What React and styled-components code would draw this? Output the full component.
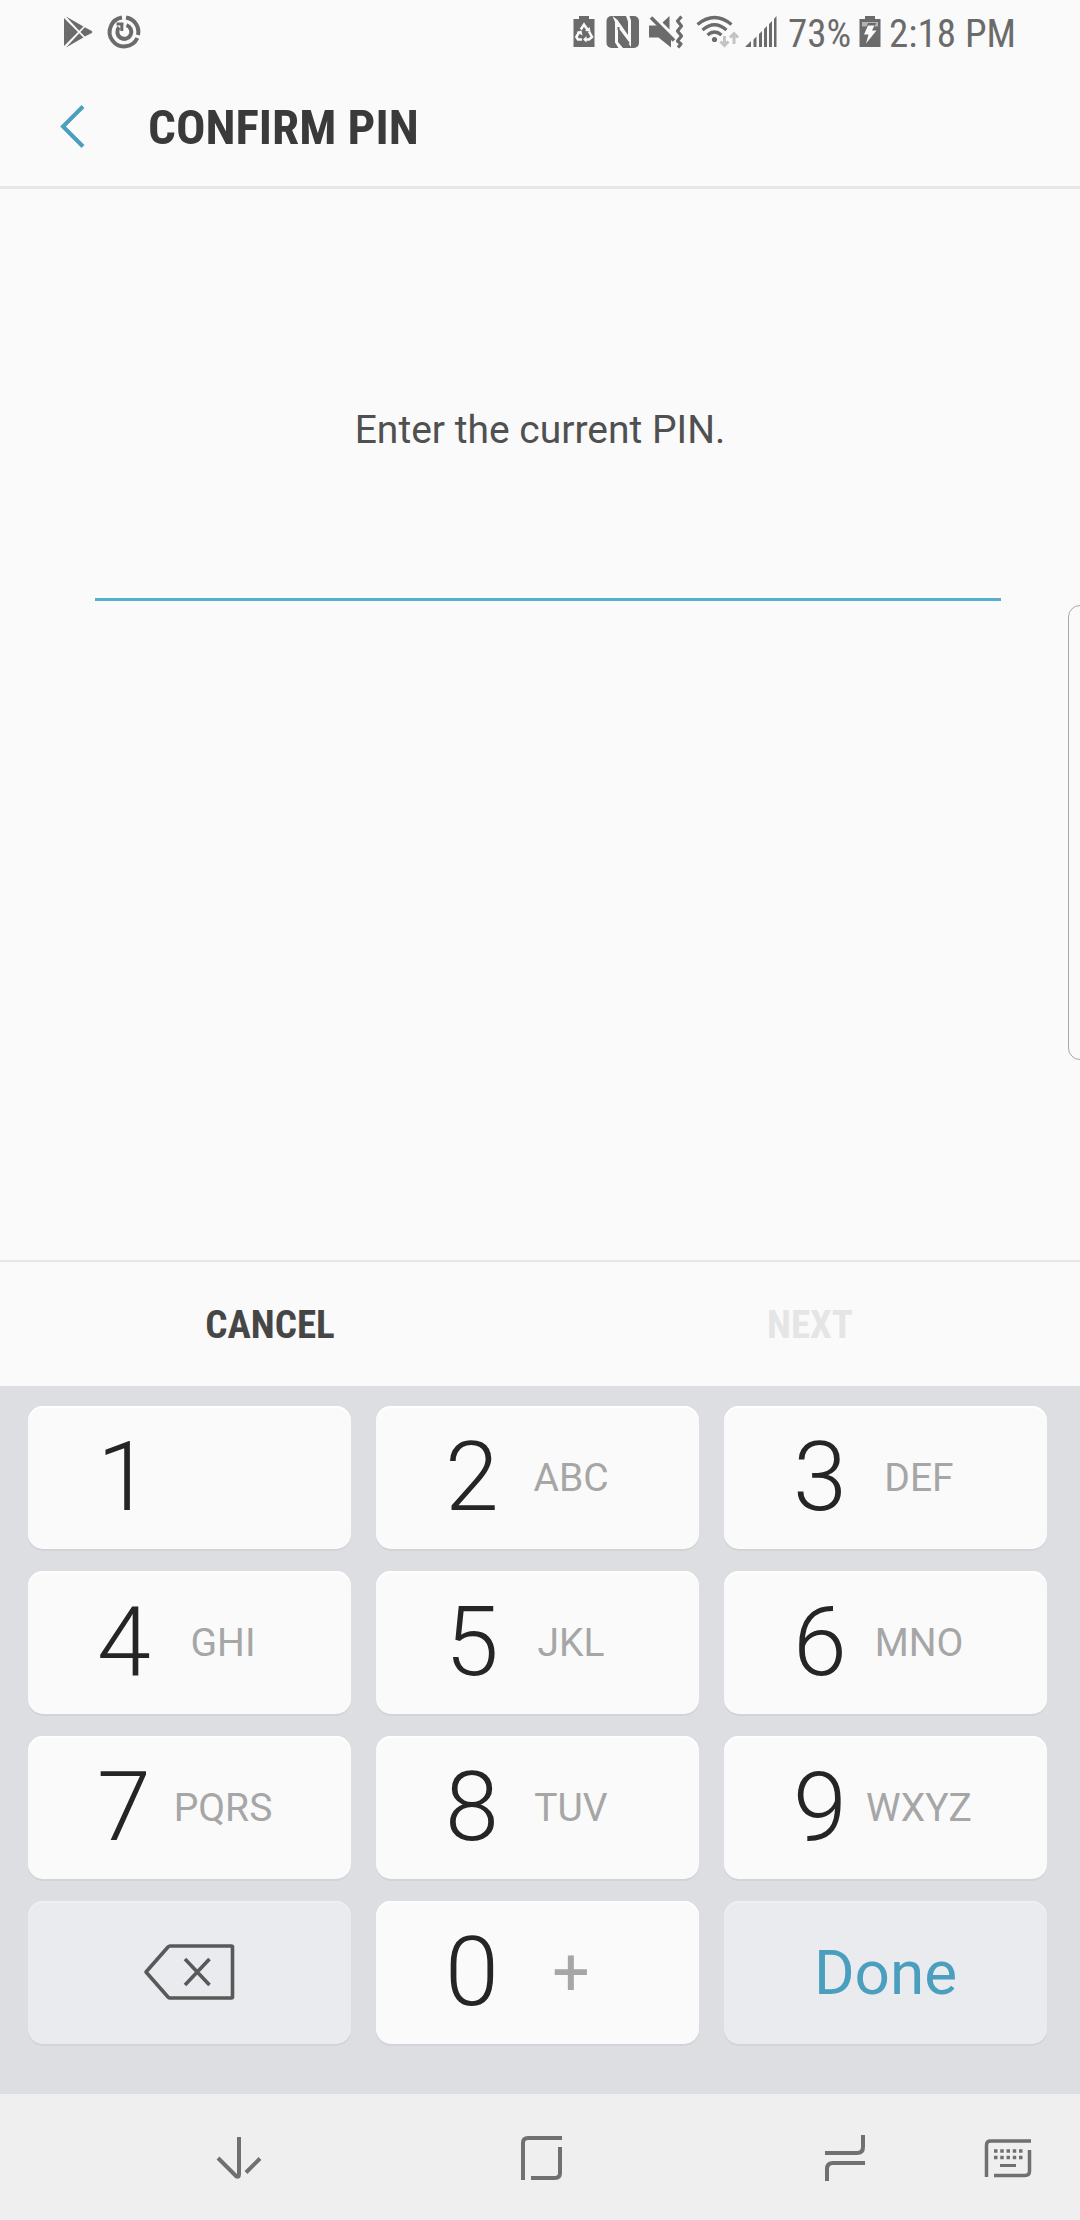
import React, { useState } from "react";
import styled, { createGlobalStyle } from "styled-components";

const GlobalStyle = createGlobalStyle`
  * {
    box-sizing: border-box;
  }
  body {
    margin: 0;
    background: #fafafa;
    font-family: Roboto, "Noto Sans", sans-serif;
  }
  button,
  input {
    margin: 0;
    padding: 0;
    border: 0;
    background: none;
    font: inherit;
    color: inherit;
    outline: none;
  }
  svg {
    display: block;
    flex: none;
    overflow: visible;
  }
`;

const condensed = `"Roboto Condensed", Roboto, sans-serif`;

const Screen = styled.div`
  position: relative;
  display: flex;
  flex-direction: column;
  min-height: 100vh;
  overflow: hidden;
`;

const StatusBar = styled.div`
  display: flex;
  justify-content: space-between;
  align-items: center;
  height: 64px;
  padding: 0 64px 0 62px;
  color: #6b6b6b;
`;

const StatusGroup = styled.div`
  display: flex;
  align-items: center;
  gap: ${(p) => p.$gap}px;
`;

const StatusText = styled.span`
  padding-top: 4px;
  font-family: ${condensed};
  font-size: 39px;
  line-height: 56px;
`;

const Header = styled.header`
  display: flex;
  align-items: center;
  gap: 60px;
  height: 125px;
  padding: 2px 0 0 56px;
  border-bottom: 3px solid #e7e7e7;
`;

const Title = styled.h1`
  margin: 0;
  padding-top: 4px;
  color: #3a3a3a;
  font-family: ${condensed};
  font-size: 49px;
  font-weight: 700;
  line-height: 64px;
`;

const IconButton = styled.button`
  display: flex;
  align-items: center;
  justify-content: center;
  width: ${(p) => p.$width}px;
  height: 80px;
  color: ${(p) => p.$color};
`;

const Main = styled.main`
  flex: 1;
  display: flex;
  flex-direction: column;
  padding: 213px 79px 0 95px;
`;

const Prompt = styled.label`
  align-self: center;
  margin-right: 16px;
  color: #505050;
  font-size: 39px;
  line-height: 56px;
`;

const PinInput = styled.input`
  width: 100%;
  height: 143px;
  padding-top: 72px;
  border-bottom: 3px solid #56aed0;
  border-radius: 0;
  color: #3a3a3a;
  font-size: 49px;
  text-align: center;
  caret-color: transparent;
`;

const EdgeHandle = styled.div`
  position: absolute;
  top: 605px;
  right: -12px;
  width: 24px;
  height: 455px;
  border: 1px solid #a8a8a8;
  border-radius: 18px;
`;

const Actions = styled.div`
  display: grid;
  grid-template-columns: 1fr 1fr;
  height: 126px;
  border-top: 2px solid #e6e6e6;
`;

const ActionButton = styled.button`
  padding-top: 2px;
  color: #464646;
  font-family: ${condensed};
  font-size: 39px;
  font-weight: 700;
  line-height: 56px;
  &:disabled {
    color: #e5e5e5;
  }
`;

const Keypad = styled.div`
  display: grid;
  grid-template-columns: repeat(3, 1fr);
  gap: 22px 25px;
  padding: 20px 33px 50px 28px;
  background: #dddee2;
`;

const Key = styled.button`
  display: flex;
  align-items: center;
  justify-content: ${(p) => (p.$tinted ? "center" : "flex-start")};
  height: 143px;
  padding-left: ${(p) => (p.$tinted ? 0 : 64)}px;
  border-radius: 15px;
  background: ${(p) => (p.$tinted ? "#e9ebef" : "#fafafa")};
  box-shadow: 0 2px 0 #d3d4d8, inset 0 2px 0 ${(p) => (p.$tinted ? "#eeeff2" : "#ffffff")};
  color: ${(p) => (p.$tinted ? "#4b9fbe" : "#252525")};
  font-size: 62px;
`;

const Digit = styled.span`
  width: 64px;
  padding-bottom: 2px;
  font-size: 97px;
  font-weight: 300;
  line-height: 112px;
  text-align: center;
`;

const Letters = styled.span`
  width: 134px;
  color: #a6a6a6;
  font-size: ${(p) => (p.$symbol ? 66 : 39)}px;
  line-height: 64px;
  text-align: center;
`;

const NavBar = styled.nav`
  display: flex;
  align-items: center;
  gap: 87px;
  height: 126px;
  padding: 2px 36px 0 199px;
  background: #efefef;
`;

const NavMain = styled.div`
  flex: 1;
  display: flex;
  justify-content: space-between;
`;

const PlayIcon = () => (
  <svg width="32" height="34" viewBox="0 0 32 34" fill="currentColor" aria-hidden="true">
    <path d="M2 3v28l14-14zM4 1.500l13.200 14.200 4.200-4.200zM22.800 12.300l-4.400 4.600 4.400 4.600 7-3.600q1.200-1 0-2zM4 32.500l13.200-14.200 4.200 4.200z" />
  </svg>
);

const UpdateIcon = () => (
  <svg width="34" height="34" viewBox="0 0 34 34" fill="none" stroke="currentColor" strokeWidth="4" aria-hidden="true">
    <path d="M15 2.600A14.500 14.500 0 1 0 30.300 23M19 2.600A14.500 14.500 0 0 1 31 20" />
    <path d="M19.500 10.200A7 7 0 1 1 12 12.300" />
    <path d="M9.500 9h7M14.800 9v7" strokeWidth="3" />
  </svg>
);

const RecycleBatteryIcon = () => (
  <svg width="25" height="34" viewBox="0 0 25 34" aria-hidden="true">
    <path fill="currentColor" d="M6 1h10v3h5.500v28H.5V4H6z" />
    <g fill="none" stroke="#fafafa" strokeWidth="2.500">
      <path d="M7.800 14.500l3.200-5 3.500 5.200M16 16.500l3 5.500-3 2.500h-3M9 24.500H5L3.300 22l2.900-5" />
    </g>
    <path fill="#fafafa" d="M12 16l5.500.5-1-4.500zM13.500 21v6.500L10 24.500zM3.500 17l5-1.500 1 5z" />
  </svg>
);

const NfcIcon = () => (
  <svg width="34" height="34" viewBox="0 0 34 34" aria-hidden="true">
    <rect x="0.500" y="1" width="32.500" height="32" rx="5" fill="currentColor" />
    <path fill="#fafafa" d="M6.500 1l5 4L22 20V6.500L20 1h3.500L25 5.500V32L12 14v13l5 6h-4.500L9 27.500V7z" />
    <path stroke="currentColor" strokeWidth="2" d="M12.500 12v2.500L23 28.500" fill="none" />
  </svg>
);

const MuteVibrateIcon = () => (
  <svg width="40" height="34" viewBox="0 0 40 34" aria-hidden="true">
    <path fill="currentColor" d="M1 10.500h9L23 23v9.500L10.500 22.500H1zM14.500 7.500L21.500 1v13.500z" />
    <path stroke="currentColor" strokeWidth="3.600" d="M3 2.500l23 23" />
    <path fill="none" stroke="currentColor" strokeWidth="3.200" strokeLinejoin="round" d="M33.500 1.500l-4 4.500 4 5-4 5 4 5-4 5 3.500 3-3 3.500" />
  </svg>
);

const WifiIcon = () => (
  <svg width="41" height="34" viewBox="0 0 41 34" aria-hidden="true">
    <g fill="none" stroke="currentColor" strokeWidth="3.200">
      <path d="M1.500 9.500q17-14 34 0M6.500 15q12-10.500 24 0M11.500 20q7-6 14 0" />
    </g>
    <circle cx="18.500" cy="24.500" r="2.600" fill="currentColor" />
    <path fill="none" stroke="#c3c3c3" strokeWidth="3" d="M28.500 21v9M24.500 26.500l4 4 4-4M38 29v-9M34 22.500l4-4 4 4" />
  </svg>
);

const SignalIcon = () => (
  <svg width="35" height="34" viewBox="0 0 35 34" fill="currentColor" aria-hidden="true">
    <path d="M0 32l6-6v6zM8.500 24.500l3-3V32h-3zM14 19l3-3v16h-3zM19 14l3-3v21h-3zM24 9l3-3v26h-3zM29 4l2.500-3v31H29z" />
  </svg>
);

const ChargingIcon = () => (
  <svg width="22" height="34" viewBox="0 0 22 34" aria-hidden="true">
    <path fill="currentColor" d="M6 1h10v3h5.500v28H.5V4H6z" />
    <path fill="#b4b4b4" d="M3 7h16v4.500H3z" />
    <path fill="currentColor" d="M9 8h8l-2 5H7z" />
    <path fill="#fafafa" d="M9 10.500h6.500L13 15.500h4.500L7 28.500l2.500-9H5z" />
  </svg>
);

const BackIcon = () => (
  <svg width="26" height="44" viewBox="0 0 26 44" fill="none" stroke="currentColor" strokeWidth="4" aria-hidden="true">
    <path d="M24 2.500L4 22.500 24 42.500" />
  </svg>
);

const BackspaceIcon = () => (
  <svg width="92" height="58" viewBox="1 1 92 58" fill="none" stroke="#595959" strokeWidth="3.600" strokeLinejoin="round" aria-hidden="true">
    <path d="M27 3h61.500q1 0 1 1v50q0 1-1 1H27q-1 0-2-1L3 29 25 4q1-1 2-1z" />
    <path d="M42 16l24.500 26M66.500 16L42 42" />
  </svg>
);

const HideIcon = () => (
  <svg width="46" height="46" viewBox="0 0 46 46" fill="none" stroke="currentColor" strokeWidth="4" aria-hidden="true">
    <path d="M2 23l18.500 18.500q2.500 1 2.500-2V2M30 37.500l14-14" />
  </svg>
);

const HomeIcon = () => (
  <svg width="44" height="46" viewBox="0 0 44 46" fill="none" stroke="currentColor" strokeWidth="4" aria-hidden="true">
    <path d="M3 45V8q0-5 5-5h34M11 43h24q5 0 5-5V12" />
  </svg>
);

const RecentsIcon = () => (
  <svg width="42" height="48" viewBox="0 0 42 48" fill="none" stroke="currentColor" strokeWidth="4" aria-hidden="true">
    <path d="M1 19h32q6 0 6-6V1M41 29H9q-6 0-6 6v12" />
  </svg>
);

const KeyboardIcon = () => (
  <svg width="50" height="40" viewBox="0 0 50 40" fill="none" stroke="currentColor" strokeWidth="3.500" aria-hidden="true">
    <path d="M3.500 39V7q0-4 4-4H48M11 37.500h31q4.500 0 4.500-4.500V12" />
    <path d="M11 13h29M11 19.500h29" strokeDasharray="3.500 2.750" />
    <path d="M17 27.500h16" strokeWidth="3" />
  </svg>
);

const keys = [
  ["1", ""],
  ["2", "ABC"],
  ["3", "DEF"],
  ["4", "GHI"],
  ["5", "JKL"],
  ["6", "MNO"],
  ["7", "PQRS"],
  ["8", "TUV"],
  ["9", "WXYZ"],
];

const DigitKey = ({ digit, letters, symbol, onPress }) => (
  <Key type="button" onClick={() => onPress(digit)}>
    <Digit>{digit}</Digit>
    <Letters $symbol={symbol}>{letters}</Letters>
  </Key>
);

export default function App() {
  const [pin, setPin] = useState("");
  const press = (digit) => setPin((value) => value + digit);

  return (
    <Screen>
      <GlobalStyle />
      <StatusBar>
        <StatusGroup $gap={13}>
          <PlayIcon />
          <UpdateIcon />
        </StatusGroup>
        <StatusGroup $gap={8}>
          <RecycleBatteryIcon />
          <NfcIcon />
          <MuteVibrateIcon />
          <WifiIcon />
          <SignalIcon />
          <StatusText>73%</StatusText>
          <ChargingIcon />
          <StatusText>2:18 PM</StatusText>
        </StatusGroup>
      </StatusBar>
      <Header>
        <IconButton type="button" aria-label="Back" $width={32} $color="#4b9fbe">
          <BackIcon />
        </IconButton>
        <Title>CONFIRM PIN</Title>
      </Header>
      <Main>
        <Prompt htmlFor="pin">Enter the current PIN.</Prompt>
        <PinInput
          id="pin"
          type="password"
          inputMode="none"
          value={pin}
          onChange={(event) => setPin(event.target.value)}
        />
      </Main>
      <EdgeHandle />
      <Actions>
        <ActionButton type="button" onClick={() => setPin("")}>
          CANCEL
        </ActionButton>
        <ActionButton type="button" disabled={pin.length < 4}>
          NEXT
        </ActionButton>
      </Actions>
      <Keypad>
        {keys.map(([digit, letters]) => (
          <DigitKey key={digit} digit={digit} letters={letters} onPress={press} />
        ))}
        <Key type="button" $tinted aria-label="Backspace" onClick={() => setPin((value) => value.slice(0, -1))}>
          <BackspaceIcon />
        </Key>
        <DigitKey digit="0" letters="+" symbol onPress={press} />
        <Key type="button" $tinted>
          Done
        </Key>
      </Keypad>
      <NavBar>
        <NavMain>
          <IconButton type="button" aria-label="Hide keyboard" $width={80} $color="#707070">
            <HideIcon />
          </IconButton>
          <IconButton type="button" aria-label="Home" $width={80} $color="#707070">
            <HomeIcon />
          </IconButton>
          <IconButton type="button" aria-label="Recent apps" $width={80} $color="#707070">
            <RecentsIcon />
          </IconButton>
        </NavMain>
        <IconButton type="button" aria-label="Choose keyboard" $width={72} $color="#707070">
          <KeyboardIcon />
        </IconButton>
      </NavBar>
    </Screen>
  );
}
